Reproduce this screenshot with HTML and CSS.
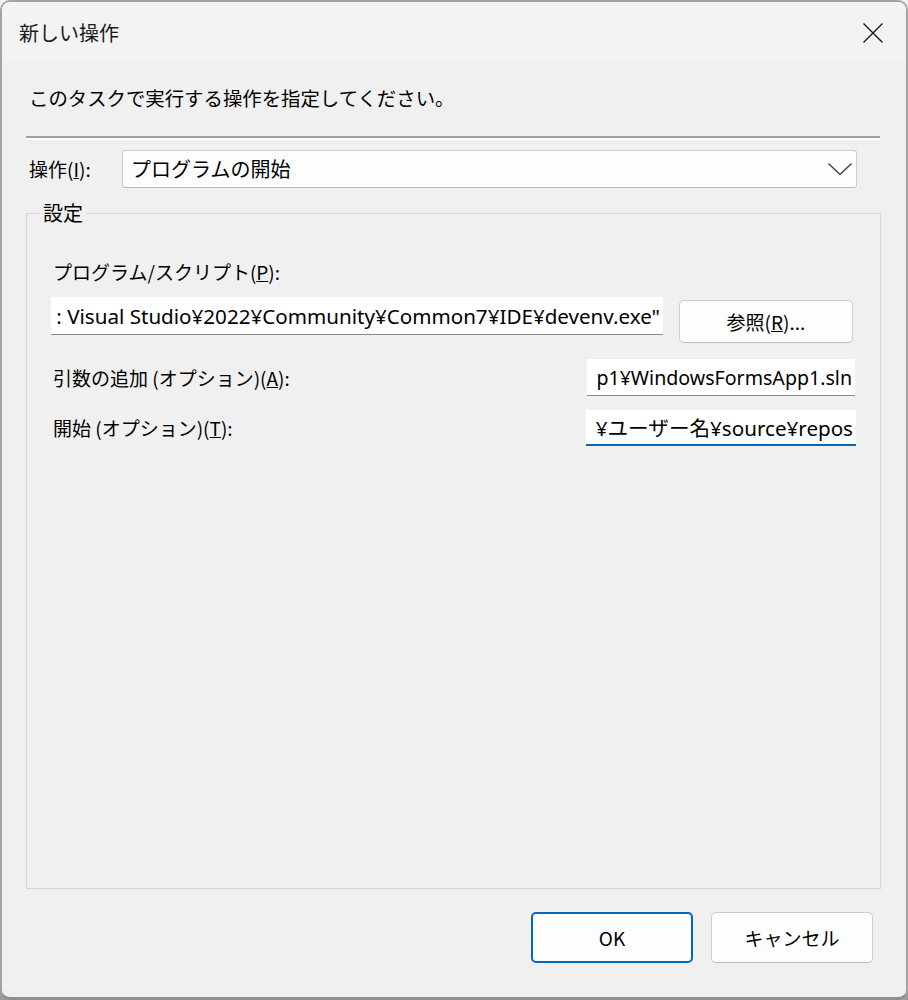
FILE: index.html
```html
<!DOCTYPE html>
<html lang="ja">
<head>
<meta charset="utf-8">
<title>新しい操作</title>
<link rel="stylesheet" href="styles.css">
</head>
<body>
<div class="window">
  <div class="titlebar">
    <span class="title">新しい操作</span>
    <svg class="close" width="22" height="22" viewBox="0 0 22 22"><path d="M1.5 1.5 L20.5 20.5 M20.5 1.5 L1.5 20.5" stroke="#1b1b1b" stroke-width="1.4" fill="none"/></svg>
  </div>
  <div class="content">
    <p class="instruction">このタスクで実行する操作を指定してください。</p>
    <div class="separator"></div>
    <div class="action-row">
      <span class="action-label">操作(<u>I</u>):</span>
      <div class="combo">
        <span class="combo-text">プログラムの開始</span>
        <svg class="chevron" width="26" height="15" viewBox="0 0 26 15"><polyline points="1.5,1.5 13,12.5 24.5,1.5" stroke="#4a4a4a" stroke-width="1.6" fill="none"/></svg>
      </div>
    </div>
    <fieldset class="group">
      <legend class="group-title">設定</legend>
      <div class="label">プログラム/スクリプト(<u>P</u>):</div>
      <div class="program-row">
        <div class="field field-program"><span class="field-text">: Visual Studio¥2022¥Community¥Common7¥IDE¥devenv.exe"</span></div>
        <button class="btn btn-browse">参照(<u>R</u>)...</button>
      </div>
      <div class="opt-row opt-args">
        <span class="label">引数の追加 (オプション)(<u>A</u>):</span>
        <div class="field field-args"><span class="field-text">p1¥WindowsFormsApp1.sln</span></div>
      </div>
      <div class="opt-row opt-start">
        <span class="label">開始 (オプション)(<u>T</u>):</span>
        <div class="field field-start focused"><span class="field-text">¥ユーザー名¥source¥repos</span></div>
      </div>
    </fieldset>
    <div class="buttons">
      <button class="btn btn-dialog btn-ok">OK</button>
      <button class="btn btn-dialog">キャンセル</button>
    </div>
  </div>
</div>
</body>
</html>
```
FILE: styles.css
```css
html {
  background: linear-gradient(#f2f2f2 50%, #9c9c9c 50%);
}
body {
  margin: 0;
  font-family: "Noto Sans CJK JP", "Noto Sans", sans-serif;
  color: #000;
}
.window {
  box-sizing: border-box;
  width: 908px;
  height: 1000px;
  border: 2px solid #a3a3a3;
  border-bottom: 3px solid #8f8f8f;
  border-radius: 10px;
  background: #f0f0f0;
  overflow: hidden;
  display: flex;
  flex-direction: column;
}
.titlebar {
  height: 60px;
  flex: none;
  background: #f3f3f3;
  display: flex;
  align-items: center;
  justify-content: space-between;
  padding: 0 22px 0 17px;
}
.title {
  font-size: 20px;
  line-height: 24px;
  color: #1a1a1a;
  margin-top: 1px;
}
.close {
  display: block;
  margin-top: 2px;
}
.content {
  flex: 1;
  display: flex;
  flex-direction: column;
  padding: 0 24px 34px 24px;
}
.instruction {
  margin: 24px 0 0 3px;
  font-size: 19.4px;
  line-height: 24px;
}
.separator {
  margin-top: 26px;
  height: 2px;
  background: #a0a0a0;
  border-bottom: 2px solid #ffffff;
  margin-right: 2px;
}
.action-row {
  margin-top: 10px;
  display: flex;
  align-items: center;
}
.action-label {
  width: 93px;
  padding-left: 3px;
  font-size: 19px;
  line-height: 24px;
}
.combo {
  box-sizing: border-box;
  width: 735px;
  height: 38px;
  background: #fdfdfd;
  border: 1px solid #cdcdcd;
  border-bottom-color: #b9b9b9;
  border-radius: 3px;
  display: flex;
  align-items: center;
  justify-content: space-between;
  padding: 0 3px 0 8px;
}
.combo-text {
  font-size: 20px;
  line-height: 24px;
}
.chevron {
  display: block;
}
.group {
  flex: 1;
  margin: 14px 1px 0 0;
  padding: 0 25px 0 24px;
  border: 1px solid #d6d6d6;
  min-width: 0;
}
.group-title {
  margin-left: -11px;
  padding: 0 3px;
  font-size: 20px;
  line-height: 22px;
}
.label {
  padding-left: 2px;
  font-size: 19px;
  line-height: 24px;
  white-space: nowrap;
}
.group > .label {
  margin-top: 36px;
}
.program-row {
  margin-top: 13px;
  display: flex;
  align-items: flex-start;
}
.field {
  box-sizing: border-box;
  background: #ffffff;
  border-bottom: 1px solid #8a8a8a;
  display: flex;
  align-items: center;
  justify-content: flex-end;
  overflow: hidden;
  padding: 0 3px;
  font-family: "Noto Sans", "Noto Sans CJK JP", sans-serif;
  font-size: 20.6px;
  white-space: nowrap;
}
.field-text {
  flex: none;
}
.field-program {
  width: 612px;
  height: 38px;
}
.btn {
  box-sizing: border-box;
  background: #fdfdfd;
  border: 1px solid #cccccc;
  border-bottom-color: #bdbdbd;
  border-radius: 5px;
  font-family: "Noto Sans CJK JP", "Noto Sans", sans-serif;
  font-size: 19px;
  color: #000;
  padding: 0;
}
.btn-browse {
  margin: 3px 0 0 16px;
  width: 174px;
  height: 43px;
}
.opt-row {
  display: flex;
  align-items: center;
  justify-content: space-between;
}
.opt-args {
  margin-top: 16px;
}
.field-args {
  width: 268px;
  height: 37px;
  font-size: 19.6px;
}
.opt-start {
  margin-top: 14px;
}
.field-start {
  width: 270px;
  height: 36px;
  margin-right: -1px;
}
.focused {
  border-bottom: 2px solid #0067c0;
}
.buttons {
  margin-top: 23px;
  display: flex;
  justify-content: flex-end;
  gap: 18px;
  padding-right: 9px;
}
.btn-dialog {
  width: 162px;
  height: 51px;
}
.btn-ok {
  border: 2px solid #0067c0;
}
```
